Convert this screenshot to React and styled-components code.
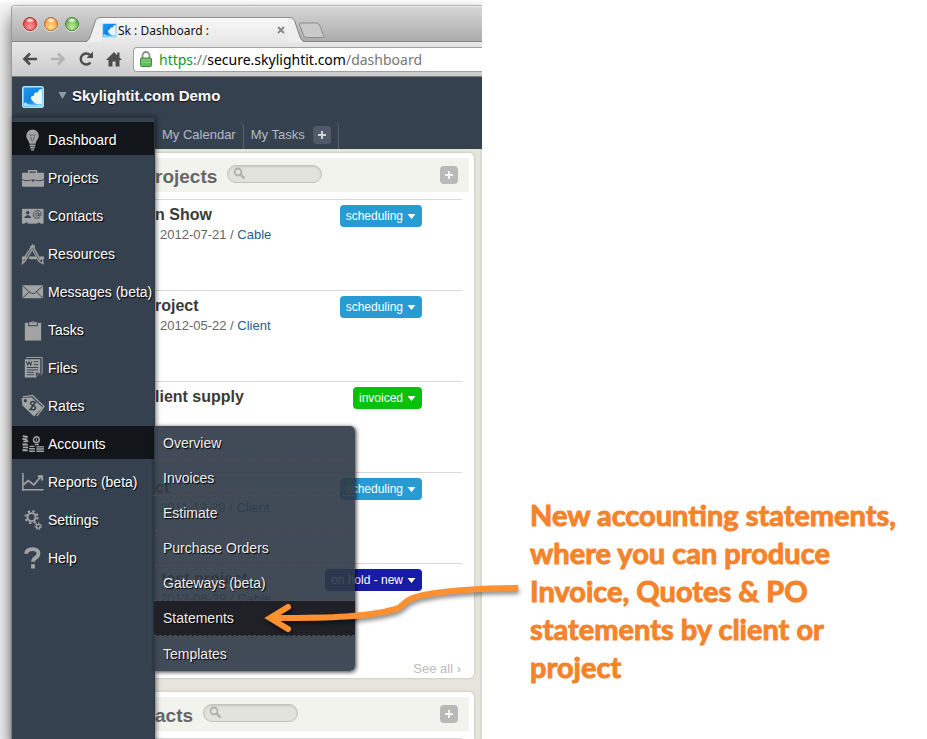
import React from 'react';
import styled, { createGlobalStyle, css } from 'styled-components';

const GlobalStyle = createGlobalStyle`
  *, *::before, *::after { box-sizing: border-box; }
  body { margin: 0; background: #fff; font-family: "Liberation Sans", Arial, sans-serif; }
  button, input { font: inherit; }
  button { border: 0; padding: 0; background: none; cursor: pointer; color: inherit; }
  a { text-decoration: none; color: inherit; }
  ul { list-style: none; margin: 0; padding: 0; }
  svg { display: block; flex: none; }
`;

const Page = styled.div`
  position: relative;
  display: grid;
  grid-template-columns: 52% 1fr;
  height: 100vh;
  overflow: hidden;
`;

const Shot = styled.div`
  padding: 5px 0 0 11px;
  overflow: hidden;
  display: flex;
  background: linear-gradient(#fff, #f4f4f4 5px);
`;

const Browser = styled.div`
  flex: 1;
  min-width: 0;
  display: flex;
  flex-direction: column;
  border-left: 1px solid #9a9a9a;
  border-top: 1px solid #b4b4b4;
  border-top-left-radius: 4px;
  box-shadow: 0 12px 18px rgba(0, 0, 0, 0.6);
`;

const TabStrip = styled.div`
  display: flex;
  align-items: flex-end;
  height: 36px;
  background: linear-gradient(#d6d6d6, #ababab);
  border-top: 1px solid #ececec;
  border-top-left-radius: 4px;
  box-shadow: inset 0 -1px #858585;
`;

const Lights = styled.div`
  display: flex;
  gap: 7px;
  padding: 0 5px 11px 11px;
`;

const Light = styled.button`
  width: 14px;
  height: 14px;
  border-radius: 50%;
  border: 1px solid ${(p) => p.$edge};
  background: radial-gradient(ellipse 5px 3px at 50% 18%, #fff, transparent),
    radial-gradient(circle at 50% 75%, ${(p) => p.$glow}, ${(p) => p.$tone} 65%, ${(p) => p.$edge});
  box-shadow: 0 1px #e4e4e4;
`;

const Tab = styled.div`
  display: flex;
  height: 25px;
`;

const TabBody = styled.div`
  display: flex;
  align-items: center;
  width: 186px;
  background: linear-gradient(#f8f8f8, #e7e7e7);
  border-top: 1px solid #8f8f8f;
  font: 12px "Noto Sans", "Open Sans", sans-serif;
  color: #111;
  gap: 1px;
  white-space: nowrap;
`;

const TabClose = styled.button`
  margin-left: auto;
  width: 14px;
  height: 14px;
  color: #8a8a8a;
`;

const NewTab = styled.button`
  height: 23px;
  align-self: flex-start;
  padding-top: 15px;
  margin-left: -8px;
`;

const Toolbar = styled.div`
  display: flex;
  align-items: center;
  gap: 4px;
  height: 35px;
  padding-left: 6px;
  background: linear-gradient(#e7e7e7, #cbcbcb);
  border-bottom: 1px solid #7d7d7d;
`;

const ToolButton = styled.button`
  display: grid;
  place-items: center;
  width: 24px;
  height: 24px;
  color: ${(p) => (p.disabled ? '#b3b3b3' : '#4d4d4d')};
`;

const AddressBar = styled.div`
  flex: 1;
  display: flex;
  align-items: center;
  gap: 7px;
  height: 25px;
  margin-left: 3px;
  padding-left: 6px;
  background: #fff;
  border: 1px solid #a0a0a0;
  border-right: 0;
  border-radius: 4px 0 0 4px;
  font: 14px "Noto Sans", "Open Sans", sans-serif;
  color: #777;
  white-space: nowrap;
`;

const Scheme = styled.span`color: #0a9a2b;`;
const Host = styled.span`color: #000;`;

const BrandRow = styled.header`
  display: flex;
  align-items: center;
  height: 40px;
  padding: 0 0 1px 10px;
  background: #36414f;
`;

const BrandName = styled.button`
  display: flex;
  align-items: center;
  gap: 5px;
  margin-left: 14px;
  padding-bottom: 3px;
  font-size: 15px;
  font-weight: bold;
  color: #fff;
  text-shadow: 0 1px 1px #111;
  svg { color: #9299a1; }
`;

const Workspace = styled.div`
  flex: 1;
  min-height: 0;
  display: grid;
  grid-template-columns: 143px 1fr;
`;

const SideMenu = styled.nav`
  position: relative;
  z-index: 2;
  padding-top: 4px;
  background: #36414f;
  border-top: 1px solid #2d3743;
  border-right: 1px solid #2d3743;
  box-shadow: 1px 0 5px rgba(0, 0, 0, 0.6);
  > ul { display: grid; gap: 5px; }
`;

const MenuItem = styled.li`
  position: relative;
`;

const MenuLink = styled.a`
  display: flex;
  align-items: center;
  gap: 3px;
  height: 33px;
  padding: 2px 0 0 9px;
  font-size: 14px;
  color: #fff;
  white-space: nowrap;
  text-shadow: 1px 1px 1px #000;
  background: ${(p) => (p.$active ? '#12161b' : 'transparent')};
  svg { color: #a2a3a3; }
`;

const SubMenu = styled.ul`
  position: absolute;
  left: 100%;
  top: 0;
  width: 201px;
  background: rgba(46, 57, 70, 0.91);
  border-radius: 0 5px 5px 0;
  box-shadow: 1px 1px 4px rgba(0, 0, 0, 0.8);
  overflow: hidden;
`;

const SubLink = styled.a`
  display: flex;
  align-items: center;
  height: 35px;
  padding-left: 9px;
  font-size: 14px;
  color: #eee;
  text-shadow: 1px 1px 1px #000;
  border-bottom: 1px dashed #4c4d4f;
  ${(p) => p.$active && css`background: #1f2126;`}
  li:last-child > & { border-bottom: 0; }
`;

const Main = styled.main`
  min-width: 0;
  display: flex;
  flex-direction: column;
`;

const NavTabs = styled.div`
  display: flex;
  align-items: flex-end;
  height: 32px;
  flex: none;
  background: #36414f;
`;

const NavTab = styled.div`
  display: flex;
  align-items: center;
  gap: 8px;
  height: 27px;
  padding: 0 7px 2px;
  font-size: 13px;
  color: #b4bac1;
  border-right: 1px solid #57616d;
  border-top-right-radius: 5px;
`;

const PlusButton = styled.button`
  display: grid;
  place-items: center;
  width: 18px;
  height: 18px;
  border-radius: 4px;
  background: ${(p) => (p.$dark ? '#505965' : '#b9b9b9')};
  color: ${(p) => (p.$dark ? '#d2d5d9' : '#f4f4f0')};
`;

const Content = styled.div`
  flex: 1;
  min-height: 0;
  display: grid;
  align-content: start;
  gap: 14px;
  padding: 4px 8px 0 0;
  background: #e5e5dc;
  box-shadow: inset -2px 0 #d8d9d0;
  overflow: hidden;
`;

const Panel = styled.section`
  padding: 5px 5px 0 0;
  background: #fff;
  border-radius: 0 5px 5px 0;
  box-shadow: 0 0 2px 1px #cfcfc5;
`;

const PanelHead = styled.div`
  display: flex;
  align-items: center;
  gap: 10px;
  height: 34px;
  padding-right: 11px;
  background: #f2f3ed;
  h2 { margin: 0; padding-top: 3px; font-size: 19px; color: #666; }
  button { margin-left: auto; }
`;

const Search = styled.label`
  display: flex;
  align-items: center;
  width: 95px;
  height: 18px;
  margin-bottom: 3px;
  padding-left: 5px;
  border: 1px solid #c3c4bd;
  border-radius: 9px;
  background: #e2e3dd;
  box-shadow: inset 0 1px 2px #c6c7c0;
  color: #b0b1ab;
  input { width: 70px; height: 14px; border: 0; background: none; outline: 0; padding: 0 4px; font-size: 11px; }
`;

const Rows = styled.ul`
  padding: 7px 7px 0 0;
`;

const Row = styled.li`
  display: flex;
  justify-content: space-between;
  align-items: flex-start;
  height: 91px;
  padding: 5px 40px 0 0;
  border-top: 1px solid #d9d9d9;
  h3 { margin: 0; padding-left: ${(p) => (p.$indent ? '6px' : 0)}; font-size: 16px; line-height: 20px; color: #3b3b36; }
  p { margin: 0; padding-left: 5px; font-size: 13px; line-height: 20px; color: #666; }
  p a { color: #265f8a; }
`;

const Status = styled.button`
  display: flex;
  align-items: center;
  gap: 4px;
  height: 22px;
  padding: 0 6px;
  border-radius: 4px;
  font-size: 12px;
  color: #fff;
  background: ${(p) => p.$tone};
`;

const SeeAll = styled.a`
  display: block;
  height: 24px;
  padding: 8px 8px 0 0;
  text-align: right;
  font-size: 13px;
  line-height: 14px;
  color: #bbb;
`;

const Note = styled.p`
  margin: 0;
  padding: 496px 20px 0 48px;
  font: bold 29px/38px Lato, sans-serif;
  color: #f5832b;
  -webkit-text-stroke: 1px #f5832b;
`;

const Arrow = styled.svg`
  position: absolute;
  z-index: 5;
  left: 260px;
  top: 575px;
  filter: drop-shadow(1px 3px 2px rgba(0, 0, 0, 0.45));
`;

const Logo = ({ size }) => (
  <svg width={size} height={size} viewBox="0 0 22 22" aria-hidden="true">
    <defs>
      <linearGradient id={`sky${size}`} x1="0" y1="0" x2="1" y2="1">
        <stop offset="0" stopColor="#1a9cf0" />
        <stop offset=".5" stopColor="#1382e2" />
        <stop offset="1" stopColor="#8fd8fa" />
      </linearGradient>
    </defs>
    <rect x=".8" y=".8" width="20.400" height="20.400" rx="2" fill={`url(#sky${size})`} stroke="#aee6fa" strokeWidth="1.600" />
    <path d="M20 3c-2.500-.3-4 1.500-4 3.500-2.500-.6-4.500 1-4 3.200-2.300-.4-3.600 1.200-3 3 .4 1.600 1.800 1.800 2.600 3 .8 1.300 2.400 2.300 4.400 2.300h4z" fill="#eaf7fd" />
    <path d="M2 20v-3c1.500-1 3-.5 3.500 1 4 1.200 9 1 14.500.5V20z" fill="#a5e2fb" />
  </svg>
);

const Caret = ({ w = 9, h = 5 }) => (
  <svg width={w} height={h} viewBox="0 0 9 5" preserveAspectRatio="none" aria-hidden="true">
    <path d="M.5 0h8L4.500 5z" fill="currentColor" />
  </svg>
);

const Plus = () => (
  <svg width="10" height="10" viewBox="0 0 10 10" aria-hidden="true">
    <path d="M5 1v8M1 5h8" stroke="currentColor" strokeWidth="2" />
  </svg>
);

const glyphs = {
  bulb: (
    <>
      <path d="M12 1a6.500 6.500 0 0 0-6.500 6.500c0 3.500 2.700 4.500 3.300 8.500h6.400c.6-4 3.300-5 3.300-8.500A6.500 6.500 0 0 0 12 1z" fill="currentColor" />
      <path d="M9 17.500h6M9.500 20h5" stroke="currentColor" strokeWidth="1.800" />
      <path d="M10.500 21.500h3v1.500h-3z" fill="currentColor" />
      <path d="M8.500 6l2 1.500 1.500-1 1.500 1 2-1.500M10 8.500l1.500 5M14 8.500l-1.500 5" stroke="#5a5d60" strokeWidth=".9" fill="none" />
    </>
  ),
  briefcase: (
    <>
      <path d="M8 7V4.500h8V7" fill="none" stroke="currentColor" strokeWidth="1.600" />
      <rect x="1" y="6.500" width="23" height="14.500" rx="1" fill="currentColor" />
      <path d="M1 13.500c3 1.800 6 1.500 9 .8M24 13.500c-3 1.800-6 1.500-9 .8" stroke="#36414f" fill="none" />
      <path d="M10.500 13.500h4l-1 2.200h-2z" fill="#36414f" />
    </>
  ),
  card: (
    <>
      <rect x="1" y="4.500" width="22.500" height="15.500" fill="currentColor" />
      <circle cx="7" cy="8.500" r="1.800" fill="#36414f" />
      <path d="M3.500 14c.2-2 2-1.500 2.800-3h1.400c.8 1.500 2.600 1 2.800 3z" fill="#36414f" />
      <g fill="none" stroke="#36414f">
        <circle cx="17" cy="10.500" r="1.600" />
        <path d="M18.600 8.800v2.500c.3 1.200 2.400.8 2.400-1.200 0-5-8-5-8 .5 0 4 4 4.500 6.500 3" />
      </g>
      <path d="M4 19h3v1.500H4zM17 19h3v1.500h-3z" fill="#36414f" />
    </>
  ),
  tools: (
    <g fill="none" stroke="currentColor">
      <path d="M14.500 3L4 19.500l-2.500 2.300.5-3.600L12.500 2" strokeWidth="1.400" />
      <path d="M11 3.500l8.500 15.500" strokeWidth="3.400" />
      <path d="M18 19.500l5 2.500-.8-5" strokeWidth="1.300" />
      <path d="M1 16h4.500M8.500 16h8M19.500 16H24" strokeWidth="3" />
      <path d="M12 5.500l7 13" stroke="#36414f" strokeWidth=".8" />
    </g>
  ),
  mail: (
    <>
      <rect x="1.500" y="5" width="21.500" height="13.500" fill="currentColor" />
      <path d="M2 6l7.500 6.500c2 1.600 3.500 1.600 5.500 0L22.500 6M2 18l6.500-6M22.500 18L16 12" fill="none" stroke="#36414f" />
    </>
  ),
  clipboard: (
    <>
      <path d="M4 4.500h17V23H4z" fill="currentColor" />
      <path d="M7.500 8V4.500h2.800a2.300 2.300 0 0 1 4.400 0h2.800V8z" fill="#36414f" />
      <path d="M8.500 7V4h2.200a1.900 1.900 0 0 1 3.600 0h2.200v3z" fill="currentColor" />
      <circle cx="12.500" cy="4" r=".8" fill="#36414f" />
    </>
  ),
  file: (
    <>
      <path d="M6 2V1h16v17l-1.500 1" fill="none" stroke="currentColor" />
      <path d="M4 3h16v13l-5 6H4z" fill="currentColor" />
      <path d="M15 22v-5.500h5z" fill="#36414f" stroke="currentColor" strokeWidth=".8" />
      <path d="M5.500 5l1.500 4 1.500-3.500L10 9l1.500-4" fill="none" stroke="#36414f" strokeWidth="1.100" />
      <path d="M13.500 5.500H18M13.500 8.500H18M6 11.500h12M6 14h12M6 16.500h7.500M6 19h7.500" stroke="#36414f" />
    </>
  ),
  tag: (
    <>
      <path d="M2 2.500L12 1l12 11.500-7.500 10" fill="none" stroke="currentColor" strokeWidth="1.300" />
      <path d="M.5 4l1 7.500L13.500 23l9-9.500L11 3z" fill="currentColor" />
      <circle cx="4.500" cy="6.500" r="1.700" fill="#36414f" />
      <path d="M14.500 8.500c-2-2-5-1-4.500 1s4.500 1.500 5 4-3 3.500-5 1M15.500 7.500l-6.500 9" fill="none" stroke="#36414f" strokeWidth="1.600" />
    </>
  ),
  coins: (
    <g fill="none" stroke="currentColor">
      <path d="M2 3.500l5 1.500M1.500 6.500l5 1M2.500 9.500l5-.5M1.500 12.500h5.500M2 15.500h5.500M1.500 18.500H7" strokeWidth="2" />
      <circle cx="16" cy="7.500" r="3" strokeWidth="1.500" />
      <path d="M16 6v3" />
      <path d="M9 14.500h5M8.500 17h6M8.500 19.500h6M14.500 12.500h4M16 15h8M16 17.200h8M16 19.500h8" strokeWidth="1.500" />
    </g>
  ),
  chart: (
    <g fill="none" stroke="currentColor">
      <path d="M2 2.500v18.500M1 20h22.500" strokeWidth="1.600" />
      <path d="M2.500 15l5-4.500 6 4.500 7-8.500" strokeWidth="1.800" />
      <path d="M17.500 6h4.500v4.500" strokeWidth="2" />
    </g>
  ),
  gears: (
    <g fill="none" stroke="currentColor">
      <circle cx="11" cy="9" r="4.200" strokeWidth="2" />
      <circle cx="11" cy="9" r="6.300" strokeWidth="2" strokeDasharray="2.500 2.450" />
      <circle cx="18" cy="18.500" r="2" strokeWidth="1.400" />
      <circle cx="18" cy="18.500" r="3.200" strokeWidth="1.200" strokeDasharray="1.500 1.370" />
    </g>
  ),
  help: (
    <>
      <path d="M5.500 7.500C5.500 3.500 8.500 2.700 12 2.700c4 0 6.200 1.800 6.200 4.800 0 4.300-5.700 4-5.700 8.500" fill="none" stroke="currentColor" strokeWidth="4" />
      <path d="M10.500 18.500h4V23h-4z" fill="currentColor" />
    </>
  ),
};

const Glyph = ({ name }) => (
  <svg width="24" height="24" viewBox="0 0 25 24" aria-hidden="true">{glyphs[name]}</svg>
);

const menu = [
  ['Dashboard', 'bulb'], ['Projects', 'briefcase'], ['Contacts', 'card'], ['Resources', 'tools'],
  ['Messages (beta)', 'mail'], ['Tasks', 'clipboard'], ['Files', 'file'], ['Rates', 'tag'],
  ['Accounts', 'coins'], ['Reports (beta)', 'chart'], ['Settings', 'gears'], ['Help', 'help'],
];

const accounts = ['Overview', 'Invoices', 'Estimate', 'Purchase Orders', 'Gateways (beta)', 'Statements', 'Templates'];

const projects = [
  { title: 'n Show', date: '2012-07-21', type: 'Cable', status: 'scheduling', tone: '#279bd4' },
  { title: 'roject', date: '2012-05-22', type: 'Client', status: 'scheduling', tone: '#279bd4' },
  { title: 'lient supply', status: 'invoiced', tone: '#07c10b' },
  { title: 'ct', date: '2011-12-29', type: 'Client', status: 'scheduling', tone: '#279bd4' },
  { title: 'test project', indent: true, date: '2012-06-29', type: 'Cable', status: 'on hold - new', tone: '#181ba3' },
];

const SearchBox = ({ label }) => (
  <Search>
    <svg width="13" height="13" viewBox="0 0 13 13" aria-hidden="true">
      <circle cx="5" cy="5" r="3.500" fill="none" stroke="currentColor" strokeWidth="1.800" />
      <path d="M7.500 7.500l4 4" stroke="currentColor" strokeWidth="2.400" />
    </svg>
    <input type="search" aria-label={label} />
  </Search>
);

export default function App() {
  return (
    <Page>
      <GlobalStyle />
      <Shot>
        <Browser>
          <TabStrip>
            <Lights>
              <Light aria-label="Close" $edge="#a5272a" $tone="#ee4a4d" $glow="#ff9c9c" />
              <Light aria-label="Minimize" $edge="#b96b26" $tone="#f5a044" $glow="#ffe38a" />
              <Light aria-label="Zoom" $edge="#3f8530" $tone="#6ab455" $glow="#c6f29a" />
            </Lights>
            <Tab>
              <svg width="18" height="25" viewBox="0 0 18 25" aria-hidden="true">
                <path d="M0 25c4 0 5-2 6.500-6L11 5c1.200-3.500 2.500-4.500 7-4.500V25z" fill="#efefef" />
                <path d="M0 24.500c4 0 5-2 6.500-6L11 5c1.200-3.500 2.500-4.500 7-4.500" fill="none" stroke="#858585" />
              </svg>
              <TabBody>
                <Logo size={15} />
                <span>Sk : Dashboard :</span>
                <TabClose aria-label="Close tab">
                  <svg width="14" height="14" viewBox="0 0 14 14">
                    <path d="M4 4l6 6M10 4l-6 6" stroke="currentColor" strokeWidth="2" />
                  </svg>
                </TabClose>
              </TabBody>
              <svg width="18" height="25" viewBox="0 0 18 25" aria-hidden="true">
                <path d="M18 25c-4 0-5-2-6.500-6L7 5C5.800 1.500 4.500.5 0 .5V25z" fill="#efefef" />
                <path d="M18 24.500c-4 0-5-2-6.500-6L7 5C5.800 1.500 4.500.5 0 .5" fill="none" stroke="#858585" />
              </svg>
            </Tab>
            <NewTab aria-label="New tab">
              <svg width="28" height="17" viewBox="0 0 28 17">
                <path d="M2.500 1H18c2.500 0 3.500 1.500 4.200 3.500l3.300 9c.5 1.500 0 2-1.500 2H9c-2 0-3-1-3.700-3L1.500 3c-.5-1.300 0-2 1-2z" fill="#c9c9c9" stroke="#8c8c8c" />
              </svg>
            </NewTab>
          </TabStrip>

          <Toolbar>
            <ToolButton aria-label="Back">
              <svg width="16" height="14" viewBox="0 0 16 14"><path d="M15 7H3M8 1.500L2.500 7 8 12.500" fill="none" stroke="currentColor" strokeWidth="2.600" /></svg>
            </ToolButton>
            <ToolButton aria-label="Forward" disabled>
              <svg width="16" height="14" viewBox="0 0 16 14"><path d="M1 7h12M8 1.500L13.500 7 8 12.500" fill="none" stroke="currentColor" strokeWidth="2.600" /></svg>
            </ToolButton>
            <ToolButton aria-label="Reload">
              <svg width="16" height="16" viewBox="0 0 16 16">
                <path d="M12.500 11.500A5.500 5.500 0 1 1 12 4" fill="none" stroke="currentColor" strokeWidth="2.400" />
                <path d="M15 .5V7H8.500z" fill="currentColor" />
              </svg>
            </ToolButton>
            <ToolButton aria-label="Home">
              <svg width="16" height="16" viewBox="0 0 16 16">
                <path d="M8 1L0 9h2.500v6.500h4v-5h3v5h4V9H16l-2.500-2.500V1.500h-2.300v2.700z" fill="currentColor" />
              </svg>
            </ToolButton>
            <AddressBar>
              <svg width="12" height="16" viewBox="0 0 12 16" aria-hidden="true">
                <path d="M2.500 8V4.500a3.500 3.500 0 0 1 7 0V8" fill="none" stroke="#8b8b8b" strokeWidth="1.800" />
                <rect x=".5" y="7" width="11" height="8.500" rx="1" fill="#65bc5c" stroke="#3f8f3c" />
                <path d="M1.500 9h9M1.500 11.500h9" stroke="#8fd684" />
              </svg>
              <span><Scheme>https</Scheme>://<Host>secure.skylightit.com</Host>/dashboard</span>
            </AddressBar>
          </Toolbar>

          <BrandRow>
            <Logo size={22} />
            <BrandName><Caret w={9} h={7} />Skylightit.com Demo</BrandName>
          </BrandRow>

          <Workspace>
            <SideMenu aria-label="Main">
              <ul>
                {menu.map(([label, icon]) => (
                  <MenuItem key={label}>
                    <MenuLink href="#" $active={label === 'Dashboard' || label === 'Accounts'}>
                      <Glyph name={icon} />
                      {label}
                    </MenuLink>
                    {label === 'Accounts' && (
                      <SubMenu>
                        {accounts.map((name) => (
                          <li key={name}><SubLink href="#" $active={name === 'Statements'}>{name}</SubLink></li>
                        ))}
                      </SubMenu>
                    )}
                  </MenuItem>
                ))}
              </ul>
            </SideMenu>

            <Main>
              <NavTabs>
                <NavTab><a href="#">My Calendar</a></NavTab>
                <NavTab>
                  <a href="#">My Tasks</a>
                  <PlusButton $dark aria-label="Add tab"><Plus /></PlusButton>
                </NavTab>
              </NavTabs>
              <Content>
                <Panel>
                  <PanelHead>
                    <h2>rojects</h2>
                    <SearchBox label="Search projects" />
                    <PlusButton aria-label="Add project"><Plus /></PlusButton>
                  </PanelHead>
                  <Rows>
                    {projects.map((p) => (
                      <Row key={p.title} $indent={p.indent}>
                        <div>
                          <h3>{p.title}</h3>
                          {p.date && <p>{p.date} / <a href="#">{p.type}</a></p>}
                        </div>
                        <Status $tone={p.tone}>{p.status}<Caret /></Status>
                      </Row>
                    ))}
                  </Rows>
                  <SeeAll href="#">See all ›</SeeAll>
                </Panel>
                <Panel>
                  <PanelHead>
                    <h2>acts</h2>
                    <SearchBox label="Search contacts" />
                    <PlusButton aria-label="Add contact"><Plus /></PlusButton>
                  </PanelHead>
                  <Rows><Row /></Rows>
                </Panel>
              </Content>
            </Main>
          </Workspace>
        </Browser>
      </Shot>
      <Note>New accounting statements, where you can produce Invoice, Quotes &amp; PO statements by client or project</Note>
      <Arrow width="260" height="64" viewBox="0 0 260 64" aria-hidden="true">
        <path d="M258 13c-36 0-83 3-102 9-14 4-11 9-20 12-28 8-64 9-122 9" fill="none" stroke="#fd9030" strokeWidth="6" />
        <path d="M28 32L10 43l18 11" fill="none" stroke="#fd9030" strokeWidth="6" strokeLinecap="round" strokeLinejoin="miter" />
      </Arrow>
    </Page>
  );
}
